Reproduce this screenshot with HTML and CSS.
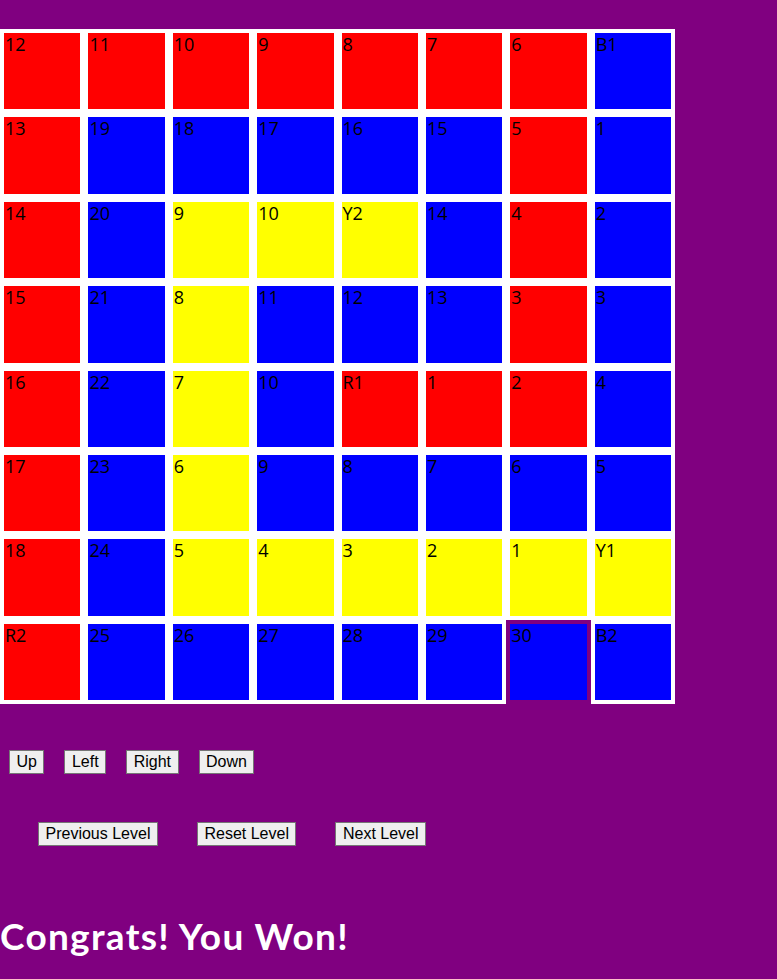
FILE: index.html
```html
<!DOCTYPE html>
<html>
<head>
<meta charset="utf-8">
<link rel="stylesheet" href="styles.css">
</head>
<body>
<div class="page">
  <div class="board">
    <div class="cell red">12</div><div class="cell red">11</div><div class="cell red">10</div><div class="cell red">9</div><div class="cell red">8</div><div class="cell red">7</div><div class="cell red">6</div><div class="cell blue">B1</div>
    <div class="cell red">13</div><div class="cell blue">19</div><div class="cell blue">18</div><div class="cell blue">17</div><div class="cell blue">16</div><div class="cell blue">15</div><div class="cell red">5</div><div class="cell blue">1</div>
    <div class="cell red">14</div><div class="cell blue">20</div><div class="cell yellow">9</div><div class="cell yellow">10</div><div class="cell yellow">Y2</div><div class="cell blue">14</div><div class="cell red">4</div><div class="cell blue">2</div>
    <div class="cell red">15</div><div class="cell blue">21</div><div class="cell yellow">8</div><div class="cell blue">11</div><div class="cell blue">12</div><div class="cell blue">13</div><div class="cell red">3</div><div class="cell blue">3</div>
    <div class="cell red">16</div><div class="cell blue">22</div><div class="cell yellow">7</div><div class="cell blue">10</div><div class="cell red">R1</div><div class="cell red">1</div><div class="cell red">2</div><div class="cell blue">4</div>
    <div class="cell red">17</div><div class="cell blue">23</div><div class="cell yellow">6</div><div class="cell blue">9</div><div class="cell blue">8</div><div class="cell blue">7</div><div class="cell blue">6</div><div class="cell blue">5</div>
    <div class="cell red">18</div><div class="cell blue">24</div><div class="cell yellow">5</div><div class="cell yellow">4</div><div class="cell yellow">3</div><div class="cell yellow">2</div><div class="cell yellow">1</div><div class="cell yellow">Y1</div>
    <div class="cell red">R2</div><div class="cell blue">25</div><div class="cell blue">26</div><div class="cell blue">27</div><div class="cell blue">28</div><div class="cell blue">29</div><div class="cell blue current">30</div><div class="cell blue">B2</div>
  </div>

  <div class="controls">
    <button class="btn">Up</button>
    <button class="btn">Left</button>
    <button class="btn">Right</button>
    <button class="btn">Down</button>
  </div>

  <div class="levels">
    <button class="btn">Previous Level</button>
    <button class="btn">Reset Level</button>
    <button class="btn">Next Level</button>
  </div>

  <h1 class="message">Congrats! You Won!</h1>
</div>
</body>
</html>
```
FILE: styles.css
```css
html, body {
  margin: 0;
  padding: 0;
  background: #800080;
}

.page {
  padding-top: 29px;
  min-height: 950px;
}

.board {
  width: 675px;
  height: 675px;
  display: grid;
  grid-template-columns: repeat(8, 1fr);
  grid-template-rows: repeat(8, 1fr);
  background: #ffffff;
}

.cell {
  box-sizing: border-box;
  border: 4px solid #ffffff;
  font-family: "Open Sans", "Noto Sans", sans-serif;
  font-size: 18px;
  line-height: 22px;
  color: #000;
  padding-left: 1px;
}

.red { background: #ff0000; }
.blue { background: #0000ff; }
.yellow { background: #ffff00; }

.cell.current {
  border-color: #800080;
}

.controls {
  display: flex;
  margin-top: 46px;
  padding-left: 9px;
  gap: 20px;
}

.levels {
  display: flex;
  margin-top: 48px;
  padding-left: 38px;
  gap: 39px;
}

.btn {
  font-family: "Liberation Sans", Arial, sans-serif;
  font-size: 16px;
  background: #efefef;
  color: #000;
  border: 1px solid #767676;
  border-radius: 0;
  padding: 1px 6.5px;
  height: 24px;
  line-height: 18px;
  margin: 0;
}

.message {
  margin: 68px 0 0 0;
  font-family: "Lato", "Open Sans", sans-serif;
  font-weight: bold;
  font-size: 37px;
  letter-spacing: 1.3px;
  color: #ffffff;
  line-height: 44px;
}
```
